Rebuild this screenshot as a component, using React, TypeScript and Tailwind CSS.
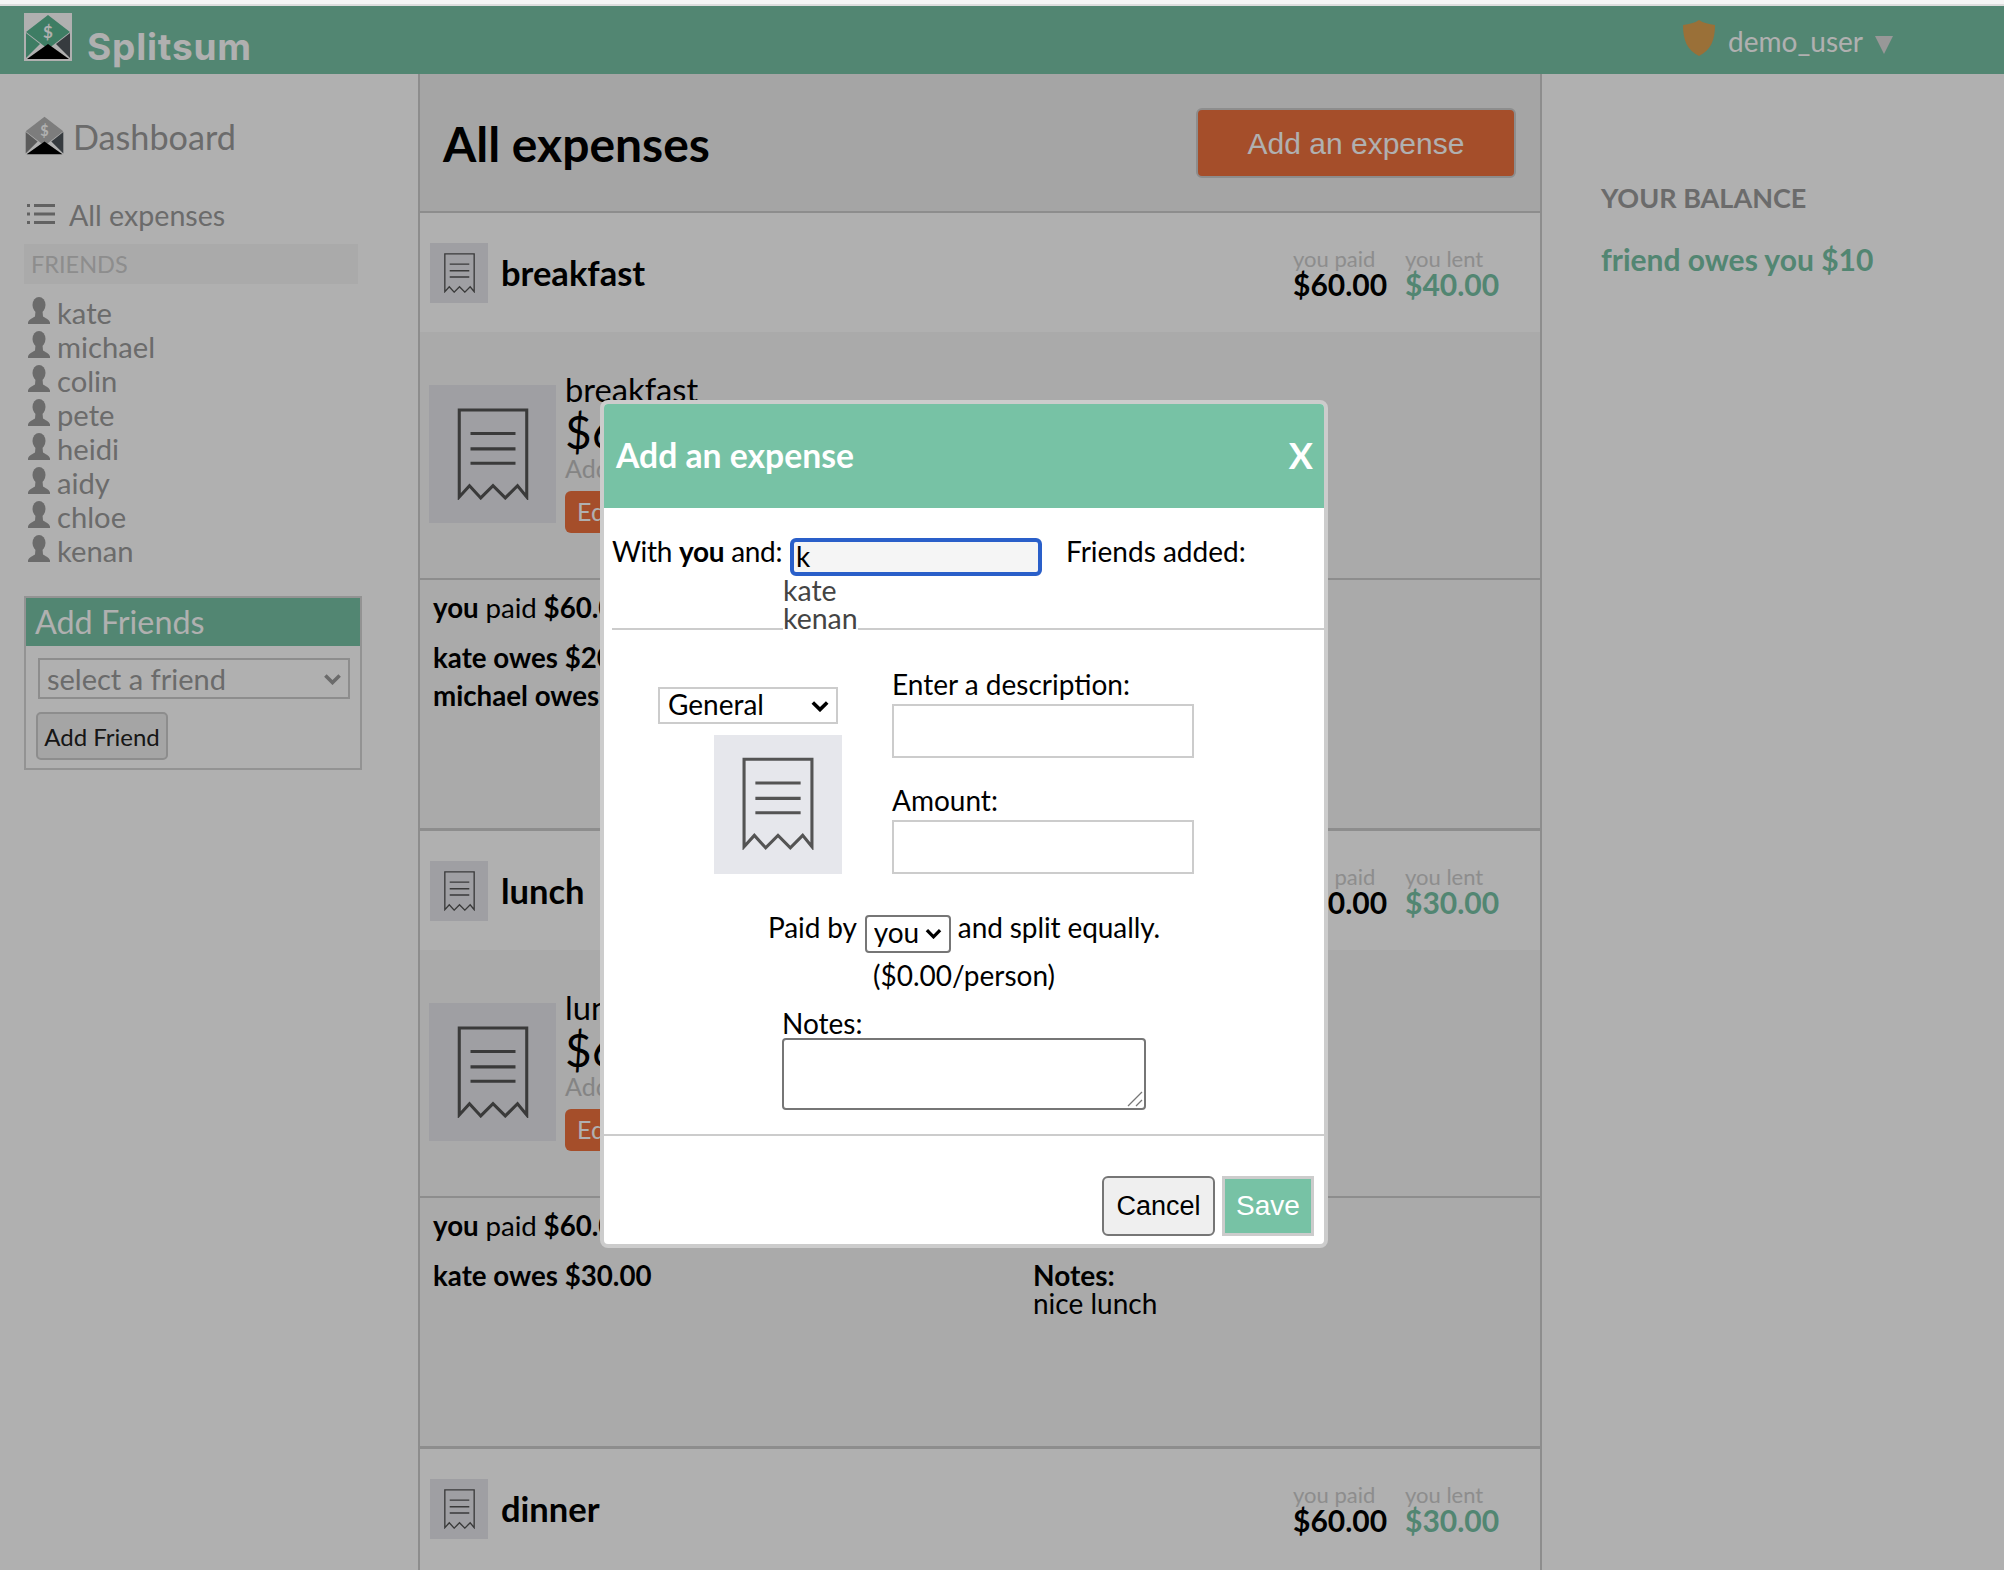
import React from 'react';

const friends = ['kate', 'michael', 'colin', 'pete', 'heidi', 'aidy', 'chloe', 'kenan'];

const Receipt = ({ className }: { className: string }) => (
  <svg viewBox="0 0 70 90" className={className} fill="none" stroke="#545454" strokeWidth="3">
    <path d="M2 2H68V87L59 76L47 88L35 76L23 88L12 76L2 87Z" />
    <path d="M13 25H57M13 40H57M13 54H57" />
  </svg>
);

const Chevron = ({ className }: { className: string }) => (
  <svg viewBox="0 0 16 10" className={className} fill="none" stroke="currentColor" strokeWidth="3">
    <path d="M2 2L8 8L14 2" />
  </svg>
);

const Person = () => (
  <svg viewBox="0 0 22 27" className="w-[22px] h-[27px] shrink-0" fill="#9c9c9c">
    <ellipse cx="11" cy="8" rx="6.5" ry="8" />
    <path d="M7.5 14H14.5L15 19.5C17 21 21 22 22 25.5V27H0V25.5C1 22 5 21 7 19.5Z" />
  </svg>
);

const Logo = ({ gray, className }: { gray?: boolean; className: string }) => (
  <svg viewBox="0 0 48 48" className={className}>
    <path d="M24 2L46 19L24 36L2 19Z" fill={gray ? '#b5b5b5' : '#5ab592'} />
    <path d="M2 20L16 31L2 45Z" fill={gray ? '#858585' : '#5ab592'} />
    <path d="M46 20L32 31L46 45Z" fill="#4f565c" />
    <path d="M24 31L45 46H3Z" fill="#000000" />
    <text x="24" y="25" textAnchor="middle" fontSize="17" fontWeight="700" fill="#ffffff">$</text>
  </svg>
);

const ExpenseRow = ({ title, paid, lent }: { title: string; paid: string; lent: string }) => (
  <div className="h-[119px] flex items-center pl-[10px] pr-[41px] bg-white">
    <div className="mt-[1px] w-[58px] h-[60px] bg-[#e6e7ec] flex items-center justify-center">
      <Receipt className="w-[33px] h-[40px]" />
    </div>
    <div className="ml-[13px] mt-[1px] text-[34.5px] font-bold text-black">{title}</div>
    <div className="ml-auto flex gap-[18px] mt-[2px]">
      <div className="w-[94px]">
        <div className="text-[22px] leading-[20px] text-[#cdcdcd]">you paid</div>
        <div className="text-[30px] leading-[30px] font-bold text-black">{paid}</div>
      </div>
      <div className="w-[94px]">
        <div className="text-[22px] leading-[20px] text-[#cdcdcd]">you lent</div>
        <div className="text-[30px] leading-[30px] font-bold text-[#77c2a5]">{lent}</div>
      </div>
    </div>
  </div>
);

const ExpenseDetail = ({ title, owes, notes }: { title: string; owes: string[]; notes?: string }) => (
  <div className="h-[496px] bg-[#f6f6f6] flex flex-col">
    <div className="h-[248px] border-b-2 border-[#cccccc] pt-[40px] pl-[9px] flex">
      <div className="mt-[13px] w-[127px] h-[138px] bg-[#e6e7ec] flex items-center justify-center">
        <Receipt className="w-[72px] h-[92px]" />
      </div>
      <div className="ml-[9px] text-black">
        <div className="text-[32.7px] leading-[36px]">{title}</div>
        <div className="text-[46px] leading-[48px]">$60.00</div>
        <div className="text-[25px] leading-[28px] -mt-[2px] text-[#c0c0c0] whitespace-nowrap">Added by demo_user</div>
        <button className="mt-[9px] h-[42px] px-[12px] bg-[#f0713e] rounded-[6px] text-white text-[25px] whitespace-nowrap">Edit expense</button>
      </div>
    </div>
    <div className="flex-1 pl-[13px] pt-[11px] flex">
      <div className="w-[600px] text-[27.7px] font-bold text-black">
        <div className="leading-[34px]">you <span className="font-normal">paid</span> $60.00</div>
        <div className="mt-[14px]">
          {owes.map(line => (
            <div key={line} className="leading-[38px]">{line}</div>
          ))}
        </div>
      </div>
      {notes && (
        <div className="mt-[52px] text-[28px] leading-[28px] text-black">
          <div className="font-bold">Notes:</div>
          <div>{notes}</div>
        </div>
      )}
    </div>
  </div>
);

const AddExpenseModal = () => (
  <div className="absolute left-[600px] top-[400px] w-[728px] h-[848px] border-4 border-[#cccccc] rounded-[8px] bg-white text-black font-[Lato,sans-serif] overflow-hidden flex flex-col">
    <div className="h-[104px] shrink-0 bg-[#77c2a5] flex items-center justify-between pl-[12px] pr-[11px] pb-[2px] text-white font-bold">
      <div className="text-[33.7px]">Add an expense</div>
      <div className="text-[36px]">X</div>
    </div>
    <div className="relative h-[122px] shrink-0 ml-[8px] border-b-2 border-[#cccccc] pt-[25px] flex items-start">
      <div className="w-[174px] text-[28px] tracking-[-0.3px] leading-[36px] h-[36px]">With <b>you</b> and:</div>
      <input
        readOnly
        value="k"
        className="ml-[4px] mt-[5px] w-[252px] h-[38px] bg-[#f5f5f5] border-4 border-[#2a5fc9] rounded-[6px] pl-[2px] pb-[2px] text-[28px] leading-[30px] outline-none"
      />
      <div className="ml-[24px] text-[28px] leading-[36px]">Friends added:</div>
      <div className="absolute left-[171px] top-[68px] bg-white text-[#444444] text-[28.5px] leading-[28px]">
        <div>kate</div>
        <div>kenan</div>
      </div>
    </div>
    <div className="h-[506px] shrink-0 border-b-2 border-[#cccccc] flex flex-col">
      <div className="flex pt-[40px]">
        <div className="w-[288px] pl-[54px] flex flex-col">
          <div className="relative mt-[17px] w-[180px] h-[37px]">
            <select className="appearance-none w-full h-full border-2 border-[#cccccc] bg-white pl-[8px] pb-[4px] text-[28px] leading-[28px] outline-none">
              <option>General</option>
            </select>
            <Chevron className="absolute right-[8px] top-[13px] w-[20px] h-[12px]" />
          </div>
          <div className="ml-[56px] mt-[11px] w-[128px] h-[139px] bg-[#e6e7ec] flex items-center justify-center">
            <Receipt className="w-[72px] h-[93px] -mt-[2px]" />
          </div>
        </div>
        <div className="-mt-[3px]">
          <div className="text-[28px] leading-[34px]">Enter a description:</div>
          <input readOnly className="mt-[3px] block w-[302px] h-[54px] border-2 border-[#cccccc] bg-white" />
          <div className="mt-[24px] text-[28px] leading-[36px]">Amount:</div>
          <input readOnly className="mt-[2px] block w-[302px] h-[54px] border-2 border-[#cccccc] bg-white" />
        </div>
      </div>
      <div className="mt-[35px] flex justify-center items-start text-[28px] tracking-[-0.1px] leading-[36px]">
        <span>Paid by</span>
        <div className="relative ml-[8px] mr-[7px] w-[86px] h-[38px] mt-[5px]">
          <select className="appearance-none w-full h-full border-2 border-[#767676] rounded-[4px] bg-white pl-[7px] pb-[4px] text-[28px] leading-[30px] outline-none">
            <option>you</option>
          </select>
          <Chevron className="absolute right-[8px] top-[14px] w-[19px] h-[11px]" />
        </div>
        <span>and split equally.</span>
      </div>
      <div className="mt-[5px] text-center text-[28px] leading-[36px]">($0.00/person)</div>
      <div className="ml-[178px] mt-[12px] text-[28px] leading-[36px] h-[25px]">Notes:</div>
      <div className="relative ml-[178px] mt-[8px] w-[364px] h-[72px]">
        <textarea readOnly className="block w-full h-full resize-none border-2 border-[#767676] rounded-[4px] bg-white" />
        <svg viewBox="0 0 16 16" className="absolute right-[3px] bottom-[3px] w-[16px] h-[16px]" fill="none" stroke="#777777" strokeWidth="1.3">
          <path d="M1 15L15 1M9 15L15 9" />
        </svg>
      </div>
    </div>
    <div className="flex justify-end gap-[7px] pt-[40px] pr-[10px] font-['Liberation_Sans',sans-serif] text-[27px]">
      <button className="w-[113px] h-[60px] bg-[#efefef] border-2 border-[#767676] rounded-[6px]">Cancel</button>
      <button className="w-[92px] h-[60px] bg-[#77c2a5] border-[3px] border-[#cccccc] text-white text-[28px]">Save</button>
    </div>
  </div>
);

export default function App() {
  return (
    <div className="relative h-[1570px] w-[2004px] overflow-hidden bg-white font-[Lato,sans-serif] text-[#9b9b9b]">
      <div className="h-[4px] bg-[#f5f5f5]" />
      <div className="h-[2px] bg-[#dddddd]" />
      <header className="h-[68px] bg-[#77c2a5] flex items-center pl-[24px] text-white">
        <div className="w-[48px] h-[48px] -mt-[6px] bg-white">
          <Logo className="w-full h-full" />
        </div>
        <div className="ml-[15px] mt-[14px] text-[37px] tracking-[0.8px] font-bold font-[Inter,sans-serif]">Splitsum</div>
        <div className="ml-auto pr-[111px] flex items-center">
          <svg viewBox="0 0 32 36" className="w-[32px] h-[36px] -mt-[4px]">
            <path d="M16 0C20 3 26 4 32 5C32 20 28 30 16 36C4 30 0 20 0 5C6 4 12 3 16 0Z" fill="#dfa251" />
          </svg>
          <div className="ml-[13px] mt-[2px] text-[28px]">demo_user</div>
          <svg viewBox="0 0 18 18" className="ml-[12px] mt-[9px] w-[18px] h-[20px]"><path d="M0 0H18L9 18Z" fill="#dddddd" /></svg>
        </div>
      </header>
      <div className="flex h-[1496px]">
        <aside className="w-[420px] shrink-0 border-r-2 border-[#cccccc] pt-[44px] pl-[24px]">
          <div className="h-[40px] flex items-center">
            <Logo gray className="w-[41px] h-[41px] -mt-[5px]" />
            <div className="ml-[8px] -mt-[2px] text-[34.2px]">Dashboard</div>
          </div>
          <div className="mt-[36px] h-[40px] flex items-center pl-[3px]">
            <svg viewBox="0 0 28 20" className="w-[28px] h-[20px]" fill="#8f8f8f">
              <path d="M0 0h3v3H0zM0 8.5h3v3H0zM0 17h3v3H0zM7 0h21v3H7zM7 8.5h21v3H7zM7 17h21v3H7z" />
            </svg>
            <div className="ml-[14px] mt-[2px] text-[28.6px]">All expenses</div>
          </div>
          <div className="mt-[10px] w-[334px] h-[40px] bg-[#f7f7f7] pl-[7px] pt-[2px] flex items-center text-[23.5px] text-[#cccccc]">FRIENDS</div>
          <div className="mt-[13px]">
            {friends.map(name => (
              <div key={name} className="h-[34px] flex items-start pl-[4px]">
                <Person />
                <div className="ml-[7px] text-[29.2px] leading-[31px]">{name}</div>
              </div>
            ))}
          </div>
          <div className="mt-[27px] w-[338px] h-[174px] border-2 border-[#d6d6d6]">
            <div className="h-[48px] bg-[#77c2a5] pl-[9px] text-white text-[32.3px] leading-[48px]">Add Friends</div>
            <div className="relative ml-[12px] mt-[12px] w-[312px] h-[41px]">
              <select className="appearance-none w-full h-full border-2 border-[#cccccc] bg-white pl-[7px] text-[29px] leading-[34px] text-[#9b9b9b] outline-none">
                <option>select a friend</option>
              </select>
              <Chevron className="absolute right-[8px] top-[15px] w-[19px] h-[12px]" />
            </div>
            <button className="ml-[10px] mt-[13px] w-[132px] h-[48px] pt-[2px] bg-[#f0f0f0] border-2 border-[#cccccc] rounded-[5px] text-[24px] leading-[30px] text-[#222222] whitespace-nowrap">Add Friend</button>
          </div>
        </aside>
        <main className="w-[1122px] shrink-0 border-r-2 border-[#cccccc]">
          <div className="h-[139px] bg-[#f0f0f0] border-b-2 border-[#cccccc] flex items-center justify-between pl-[23px] pr-[24px]">
            <div className="text-[48px] font-bold text-black mt-[2px]">All expenses</div>
            <button className="w-[320px] h-[70px] pt-[2px] bg-[#f0713e] border-2 border-[#cccccc] rounded-[6px] text-white text-[30px] font-['Liberation_Sans',sans-serif]">Add an expense</button>
          </div>
          <ExpenseRow title="breakfast" paid="$60.00" lent="$40.00" />
          <ExpenseDetail title="breakfast" owes={['kate owes $20.00', 'michael owes $20.00']} />
          <div className="h-[3px] bg-[#cccccc]" />
          <ExpenseRow title="lunch" paid="$60.00" lent="$30.00" />
          <ExpenseDetail title="lunch" owes={['kate owes $30.00']} notes="nice lunch" />
          <div className="h-[3px] bg-[#cccccc]" />
          <ExpenseRow title="dinner" paid="$60.00" lent="$30.00" />
        </main>
        <section className="pl-[59px] pt-[104px]">
          <div className="text-[27px] font-bold text-[#9b9b9b] leading-[40px]">YOUR BALANCE</div>
          <div className="mt-[21px] text-[30px] font-bold text-[#77c2a5] leading-[40px]">friend owes you $10</div>
        </section>
      </div>
      <div className="absolute inset-x-0 top-[6px] bottom-0 bg-[rgba(0,0,0,0.31)]" />
      <AddExpenseModal />
    </div>
  );
}
